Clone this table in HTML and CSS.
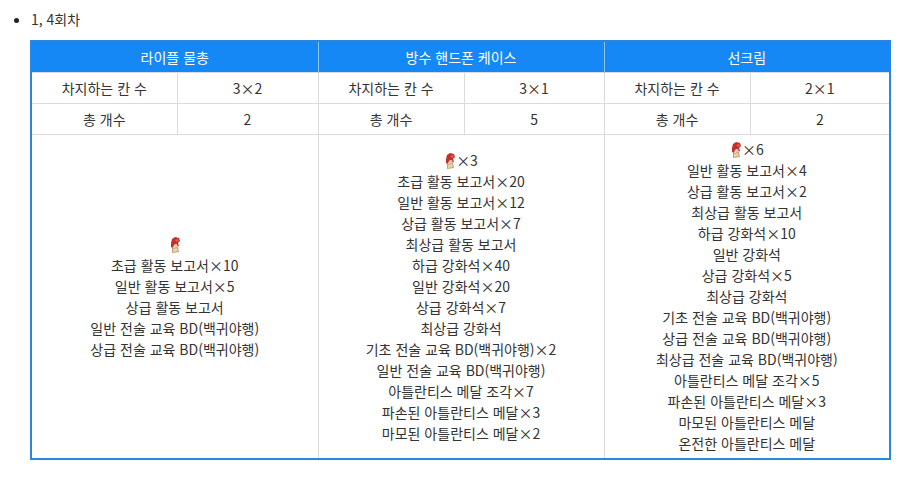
FILE: index.html
```html
<!DOCTYPE html>
<html lang="ko">
<head>
<meta charset="utf-8">
<link rel="stylesheet" href="styles.css">
</head>
<body>
<ul class="list">
  <li>1, 4회차
    <table class="tbl">
      <colgroup>
        <col class="c-lab1"><col class="c-val1">
        <col class="c-lab"><col class="c-val">
        <col class="c-lab"><col class="c-val">
      </colgroup>
      <thead>
        <tr>
          <th colspan="2">라이플 물총</th>
          <th colspan="2">방수 핸드폰 케이스</th>
          <th colspan="2">선크림</th>
        </tr>
      </thead>
      <tbody>
        <tr>
          <td>차지하는 칸 수</td><td>3×2</td>
          <td>차지하는 칸 수</td><td>3×1</td>
          <td>차지하는 칸 수</td><td>2×1</td>
        </tr>
        <tr>
          <td>총 개수</td><td>2</td>
          <td>총 개수</td><td>5</td>
          <td>총 개수</td><td>2</td>
        </tr>
        <tr class="items">
          <td colspan="2">
            <div><svg class="ico" viewBox="0 0 12 16" width="12" height="16"><path d="M2 6 L3 2 L6 0 L10 1 L11 4 L9 6 L10 9 L8 10 L7 7 L5 8 L4 11 L2 10 Z" fill="#c42f2a"/><path d="M6 3 L9 2 L10 4 L8 5 Z" fill="#e45a4f"/><path d="M5 8 L8 7 L9 10 L6 11 Z" fill="#f0c6a4"/><path d="M3 11 L9 10 L10 15 L3 16 Z" fill="#c4a274"/><path d="M4 12 L8 11 L9 14 L4 15 Z" fill="#e8d4ae"/></svg></div>
            <div>초급 활동 보고서×10</div>
            <div>일반 활동 보고서×5</div>
            <div>상급 활동 보고서</div>
            <div>일반 전술 교육 BD(백귀야행)</div>
            <div>상급 전술 교육 BD(백귀야행)</div>
          </td>
          <td colspan="2">
            <div><svg class="ico" viewBox="0 0 12 16" width="12" height="16"><path d="M2 6 L3 2 L6 0 L10 1 L11 4 L9 6 L10 9 L8 10 L7 7 L5 8 L4 11 L2 10 Z" fill="#c42f2a"/><path d="M6 3 L9 2 L10 4 L8 5 Z" fill="#e45a4f"/><path d="M5 8 L8 7 L9 10 L6 11 Z" fill="#f0c6a4"/><path d="M3 11 L9 10 L10 15 L3 16 Z" fill="#c4a274"/><path d="M4 12 L8 11 L9 14 L4 15 Z" fill="#e8d4ae"/></svg>×3</div>
            <div>초급 활동 보고서×20</div>
            <div>일반 활동 보고서×12</div>
            <div>상급 활동 보고서×7</div>
            <div>최상급 활동 보고서</div>
            <div>하급 강화석×40</div>
            <div>일반 강화석×20</div>
            <div>상급 강화석×7</div>
            <div>최상급 강화석</div>
            <div>기초 전술 교육 BD(백귀야행)×2</div>
            <div>일반 전술 교육 BD(백귀야행)</div>
            <div>아틀란티스 메달 조각×7</div>
            <div>파손된 아틀란티스 메달×3</div>
            <div>마모된 아틀란티스 메달×2</div>
          </td>
          <td colspan="2">
            <div><svg class="ico" viewBox="0 0 12 16" width="12" height="16"><path d="M2 6 L3 2 L6 0 L10 1 L11 4 L9 6 L10 9 L8 10 L7 7 L5 8 L4 11 L2 10 Z" fill="#c42f2a"/><path d="M6 3 L9 2 L10 4 L8 5 Z" fill="#e45a4f"/><path d="M5 8 L8 7 L9 10 L6 11 Z" fill="#f0c6a4"/><path d="M3 11 L9 10 L10 15 L3 16 Z" fill="#c4a274"/><path d="M4 12 L8 11 L9 14 L4 15 Z" fill="#e8d4ae"/></svg>×6</div>
            <div>일반 활동 보고서×4</div>
            <div>상급 활동 보고서×2</div>
            <div>최상급 활동 보고서</div>
            <div>하급 강화석×10</div>
            <div>일반 강화석</div>
            <div>상급 강화석×5</div>
            <div>최상급 강화석</div>
            <div>기초 전술 교육 BD(백귀야행)</div>
            <div>상급 전술 교육 BD(백귀야행)</div>
            <div>최상급 전술 교육 BD(백귀야행)</div>
            <div>아틀란티스 메달 조각×5</div>
            <div>파손된 아틀란티스 메달×3</div>
            <div>마모된 아틀란티스 메달</div>
            <div>온전한 아틀란티스 메달</div>
          </td>
        </tr>
      </tbody>
    </table>
  </li>
</ul>
</body>
</html>
```
FILE: styles.css
```css
html, body {
  margin: 0;
  padding: 0;
  background: #fff;
}
body {
  font-family: "Noto Sans CJK KR", "Noto Sans", sans-serif;
  font-size: 14px;
  color: #333;
}
.list {
  margin: 9px 0 0 0;
  padding-left: 31px;
  line-height: 21px;
}
.list li::marker {
  color: #222;
}
.tbl {
  margin-top: 10px;
  margin-left: -1px;
  width: 861px;
  border-collapse: collapse;
  border: 2px solid #2b86e0;
  table-layout: fixed;
  text-align: center;
}
.c-lab1 { width: 146px; }
.c-val1 { width: 141px; }
.c-lab { width: 146px; }
.c-val { width: 140px; }
.tbl th {
  background: #1688f5;
  color: #fff;
  font-weight: 400;
  height: 30px;
  padding: 0;
  border-left: 1px solid #8cc6fa;
}
.tbl th:first-child { border-left: none; }
.tbl td {
  border: 1px solid #dcdcdc;
  height: 30px;
  padding: 0;
}
.items td {
  padding: 4px 0;
  vertical-align: middle;
  line-height: 21px;
}
.ico {
  vertical-align: -3px;
}
```
